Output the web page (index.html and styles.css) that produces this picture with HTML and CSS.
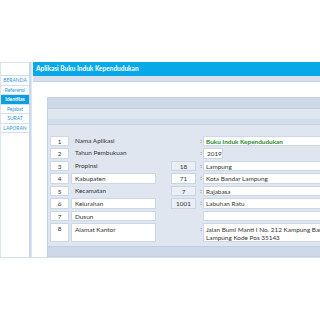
FILE: index.html
```html
<!DOCTYPE html>
<html lang="id">
<head>
  <meta charset="UTF-8" />
  <title>Buku Induk Kependudukan</title>
  <link rel="stylesheet" href="styles.css">
</head>
<body>
  <div class="page">
    <div class="side">
      <div class="side-top"></div>
      <a class="menu">BERANDA</a>
      <a class="menu">Referensi</a>
      <a class="menu active">Identitas</a>
      <a class="menu">Pejabat</a>
      <a class="menu">SURAT</a>
      <a class="menu">LAPORAN</a>
    </div>

    <div class="main">
      <div class="topbar">Aplikasi Buku Induk Kependudukan</div>
      <div class="subbar"></div>

      <div class="panel">
        <div class="panel-head"></div>
        <div class="panel-strip"></div>

        <div class="rows">
          <div class="no">1</div><div class="lbl">Nama Aplikasi</div><div class="kode empty"></div><div class="sep">:</div><div class="val app">Buku Induk Kependudukan</div>
          <div class="no">2</div><div class="lbl">Tahun Pembukuan</div><div class="kode empty"></div><div class="sep">:</div><div class="val short">2019</div>
          <div class="no">3</div><div class="lbl">Propinsi</div><div class="kode">18</div><div class="sep">:</div><div class="val">Lampung</div>
          <div class="no">4</div><div class="lbl box">Kabupaten</div><div class="kode white">71</div><div class="sep">:</div><div class="val">Kota Bandar Lampung</div>
          <div class="no">5</div><div class="lbl">Kecamatan</div><div class="kode">7</div><div class="sep">:</div><div class="val">Rajabasa</div>
          <div class="no">6</div><div class="lbl box">Kelurahan</div><div class="kode">1001</div><div class="sep">:</div><div class="val">Labuhan Ratu</div>
          <div class="no">7</div><div class="lbl box">Dusun</div><div class="kode empty"></div><div class="sep"></div><div class="val"></div>
          <div class="no tall">8</div><div class="lbl box tall">Alamat Kantor</div><div class="kode empty"></div><div class="sep tall">:</div><div class="val tall">Jalan Bumi Manti I No. 212 Kampung Baru Kota<br>Lampung Kode Pos 35143</div>
        </div>

        <div class="panel-foot"></div>
      </div>
    </div>
  </div>
</body>
</html>
```

FILE: styles.css
```css
* { margin:0; padding:0; box-sizing:border-box }
html, body { width:100%; height:100%; background:#fff; overflow:hidden }
body { font-family:Lato,"Open Sans",sans-serif; color:#333 }

.page {
  display:flex; width:420px;
  margin-top:62px; height:196px;
  border-bottom:1px solid #d6e0ec;
}

/* sidebar */
.side {
  width:31px; flex:none;
  border-right:2px solid #c9d8ea;
  border-left:1px solid #dbe4ef;
  display:flex; flex-direction:column;
}
.side-top { height:14px; border-top:1px solid #dbe4ef; border-bottom:1px solid #cfdbe9 }
.menu {
  display:block; height:9.5px; line-height:9px;
  font-size:5px; text-align:center; color:#2c97d6;
  border-bottom:1px solid #d4e0ed;
}
.menu.active { background:#0c9fe0; color:#fff; font-weight:700 }

/* main column */
.main { flex:1; padding-left:1px; border-left:1px solid #dfe7f1 }
.topbar {
  height:14px; background:#08a9e8; color:#fff;
  font-size:6.5px; font-weight:700; line-height:14px;
  padding-left:3px;
}
.subbar { height:6px; background:#d6dfeb; border-bottom:1px solid #c4d1e2 }

.panel {
  margin:15px 0 0 14px;
  height:160px;
  background:#dfe6f0;
  border:1px solid #c5d2e3;
  display:flex; flex-direction:column;
}
.panel-head { height:11px; background:#cdd9e8; border-bottom:1px solid #bfcde0 }
.panel-strip { height:6px; margin-top:10px; background:#d2dcea; border-bottom:1px solid #c7d3e3 }

.rows {
  display:grid;
  grid-template-columns:21px 100px 25px 7px 140px;
  grid-auto-rows:10.5px;
  row-gap:2px;
  margin:11px 0 0 2px;
  font-size:6.4px;
}
.rows > div { line-height:10px }
.no {
  background:#fff; border:1px solid #cdd8e6;
  text-align:center; margin-right:2px;
}
.lbl { padding-left:4px; margin-right:15px }
.lbl.box { background:#fff; border:1px solid #cdd8e6; padding-left:3px }
.kode {
  background:#eaeff6; border:1px solid #c9d5e4;
  text-align:center;
}
.kode.white { background:#fff }
.kode.empty { background:none; border:none }
.sep { text-align:center; padding-left:3px; color:#444 }
.val {
  background:#fff; border:1px solid #cdd8e6;
  padding-left:2px; white-space:nowrap; overflow:hidden;
}
.val.app { color:#2c8a2c; font-weight:700 }
.val.short { width:20px; padding-left:3px }
.rows > .tall { grid-row:span 2; height:19px; line-height:7.5px; padding-top:2px }
.rows > .no.tall { padding-top:1px }

.panel-foot { margin-top:auto; height:10px; background:#cdd9e8; border-top:1px solid #bfcde0 }
```
